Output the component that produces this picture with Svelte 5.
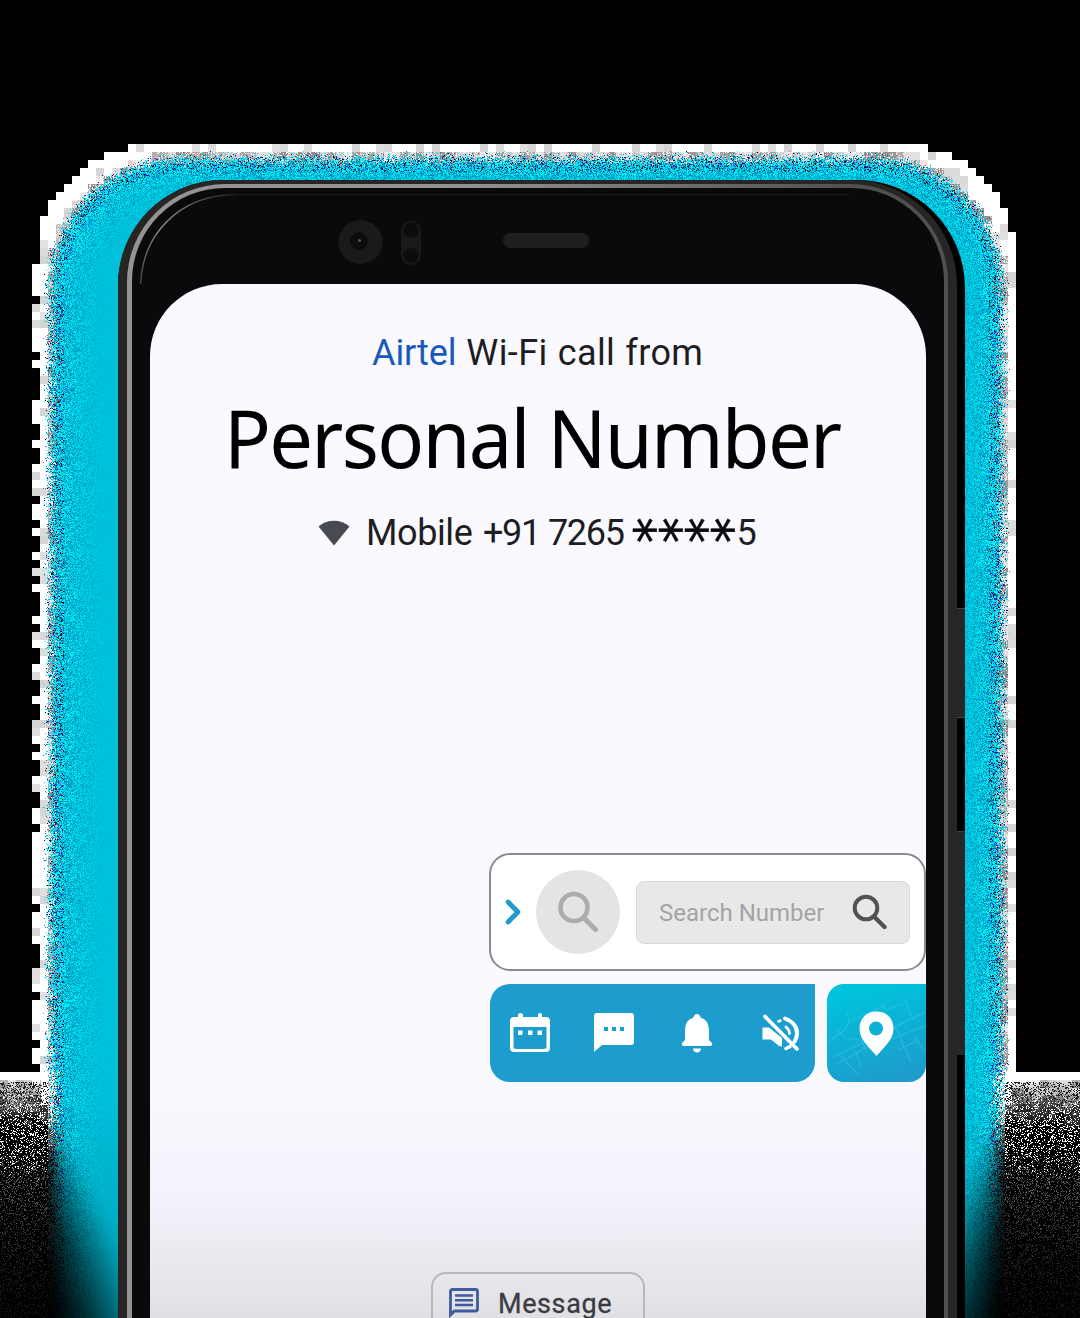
<script>
  import { onMount } from 'svelte';

  const WIDTH = 1080;
  const HEIGHT = 1318;
  let canvas;

  // Small seeded generator so the grain is identical on every load.
  let seed = 90210;
  function rnd() {
    seed = (seed * 1664525 + 1013904223) >>> 0;
    return seed / 4294967296;
  }

  const clamp = (v, a = 0, b = 1) => Math.min(b, Math.max(a, v));
  const smooth = (a, b, v) => {
    const t = clamp((v - a) / (b - a));
    return t * t * (3 - 2 * t);
  };

  // Depth in pixels inside the rounded glow shape; negative outside.
  function depth(x, y, r) {
    const dx = Math.abs(x - 526) - (486 - r);
    const dy = 148 + r - y;
    if (dx > 0 && dy > 0) return r - Math.hypot(dx, dy);
    return r - Math.max(dx, dy);
  }

  function paint(ctx) {
    const img = ctx.createImageData(WIDTH, HEIGHT);
    const cols = WIDTH / 8;
    const cell = [];
    for (let by = 0; by < 165; by++) {
      for (let bx = 0; bx < cols; bx++) {
        const edge = depth(bx * 8 + 4, by * 8 + 4, 110);
        const d = depth(bx * 8 + 4, by * 8 + 4, 140);
        cell.push({ d, on: edge > -3 || (bx === 4 && by > 32 && rnd() < 0.6), tone: rnd() });
      }
    }
    for (let y = 0; y < HEIGHT; y++) {
      for (let x = 0; x < WIDTH; x++) {
        const c = cell[(y >> 3) * cols + (x >> 3)];
        const d = depth(x, y, 140);
        let r = 0, g = 0, b = 0;
        if (c.on && y < 1150) {
          r = g = b = 255;
          if (c.d > -6 && c.d < 5 && c.tone > 0.72) r = g = b = 175 + c.tone * 50;
          if (c.d >= 5) {
            r = 150 + c.tone * 100;
            g = b = r - 14;
            if (rnd() < 0.25) r = g = b = 245;
          }
        }
        const q = rnd();
        const k = rnd();
        if (d > 2 && q < smooth(2, 19, d)) {
          const grit = 1 - smooth(12, 38, d);
          if (k < grit * 0.66) {
            const s = rnd();
            if (s < 0.45) [r, g, b] = [0, 245, 255];
            else if (s < 0.6 && d < 24) [r, g, b] = [0, 20, 30];
            else if (s < 0.73) [r, g, b] = d < 24 ? [20, 30, 225] : [10, 130, 215];
            else if (s < 0.94 || d > 22) [r, g, b] = [0, 130, 165];
            else if (s < 0.97) [r, g, b] = [235, 60, 90];
            else [r, g, b] = [110, 110, 115];
          } else {
            const n = (rnd() - 0.5) * 130 * (1 - smooth(12, 76, d));
            r = 0;
            g = clamp(192 + n, 0, 255);
            b = clamp(218 + n * 0.6, 0, 255);
          }
        }
        if (y >= 1072) {
          const t = clamp((y - 1085) / 233);
          if (d < 8) {
            const band = y < 1080 ? 255 : clamp(245 - (y - 1076) * 5 + (c.tone - 0.5) * 90, 0, 255);
            r = g = b = d > 0 && y < 1105 ? 255 : band;
            if (y >= 1082) {
              const fall = Math.exp(-Math.max(0, y - 1140) / 80);
              const bright = rnd() < 1 - smooth(1130, 1185, y) ? 255 : 150 * fall * (0.4 + k);
              if (q < 0.25 * smooth(1080, 1120, y)) r = g = b = bright;
              else if (k < 0.35) r = g = b = Math.min(band, 35 * fall);
            }
          } else {
            const f = smooth(t * 40 - 40, 8 + t * 120, d) * (1 - 0.16 * t);
            const fade = 1 - smooth(1085, 1120, y) * (1 - f);
            r *= fade;
            g *= fade;
            b *= fade;
            const speck = (1 - smooth(8, 26, d)) * 0.4;
            if (rnd() < speck) r = g = b = rnd() < 1 - smooth(1100, 1150, y) ? 255 : 70 * (1 - t);
          }
        }
        const i = (y * WIDTH + x) * 4;
        img.data[i] = r;
        img.data[i + 1] = g;
        img.data[i + 2] = b;
        img.data[i + 3] = 255;
      }
    }
    ctx.putImageData(img, 0, 0);
  }

  onMount(() => paint(canvas.getContext('2d')));
</script>

<main class="stage">
  <canvas class="glow" bind:this={canvas} width={WIDTH} height={HEIGHT}></canvas>

  <div class="phone">
    <i class="key power"></i>
    <i class="key volume"></i>
    <div class="shell">
      <div class="rim">
        <div class="face">
          <svg class="sensors" width="812" height="96" viewBox="132 188 812 96">
            <defs>
              <linearGradient id="shine" x1="0" y1="1" x2="1" y2="0">
                <stop offset="0" stop-color="#444" /><stop offset=".45" stop-color="#929292" /><stop offset="1" stop-color="#222" />
              </linearGradient>
            </defs>
            <path d="M140.500 288C141 235 178 196 234 194.500" fill="none" stroke="url(#shine)" stroke-width="1.300" />
            <path d="M234 194.500H850" stroke="#1b1b1b" />
            <circle cx="360.500" cy="242" r="22" fill="#1a1a1a" />
            <circle cx="359" cy="241" r="9" fill="#0d0d0d" />
            <circle cx="359.500" cy="240.500" r="1.500" fill="#555" />
            <rect x="401" y="221" width="20" height="44" rx="10" fill="#191919" />
            <circle cx="411" cy="230" r="7.500" fill="#0c0c0c" />
            <circle cx="411" cy="255.500" r="7.500" fill="#0c0c0c" />
            <rect x="503" y="233" width="86.500" height="15" rx="7.500" fill="#1e1e20" />
          </svg>

          <section class="screen">
            <header class="caller">
              <p class="carrier"><span>Airtel</span> Wi-Fi call from</p>
              <h1>Personal Number</h1>
              <p class="number">
                <svg width="32" height="26" viewBox="0 0 32 26"><path d="M.500 6.500C9-1.300 23-1.300 31.500 6.500L16 25.500Z" fill="#484a52" /></svg>
                <span class="digits">Mobile <span class="code">+91</span><span class="mid">7265</span></span>
                <span class="stars">
                  {#each [0, 1, 2, 3] as n (n)}<b>*</b>{/each}
                </span>
                <span class="last">5</span>
              </p>
            </header>

            <div class="widget">
              <div class="search">
                <svg class="chevron" width="18" height="28" viewBox="0 0 18 28"><path d="M4 4L14 14L4 24" fill="none" stroke="#1c9dcd" stroke-width="4.800" stroke-linecap="round" stroke-linejoin="round" /></svg>
                <div class="avatar">
                  <svg width="42" height="42" viewBox="0 0 42 42" fill="none" stroke="#acacac"><circle cx="17" cy="16.500" r="13.500" stroke-width="4.600" /><path d="M28 28L38.500 38.500" stroke-width="5" stroke-linecap="round" /></svg>
                </div>
                <div class="field">
                  <span>Search Number</span>
                  <svg width="36" height="36" viewBox="0 0 36 36" fill="none" stroke="#525252"><circle cx="14" cy="14" r="11.300" stroke-width="4" /><path d="M23 23.500L32.500 33" stroke-width="4.400" stroke-linecap="round" /></svg>
                </div>
              </div>

              <div class="tools">
                <div class="actions">
                  <svg width="42" height="42" viewBox="0 0 42 42" fill="#fff"><path fill-rule="evenodd" d="M5 5H9V3Q9 1 11.500 1T14 3V5H29V3Q29 1 31 1T33 3V5H37Q41 5 41 9V36Q41 40 37 40H5Q1 40 1 36V9Q1 5 5 5ZM4.500 15V34.500Q4.500 37 7 37H35Q37.500 37 37.500 34.500V15Z" /><path d="M9 18.500h4.500v4.500h-4.500zM19 18.500h4.500v4.500h-4.500zM28.500 18.500h4.500v4.500h-4.500z" /></svg>
                  <svg width="42" height="42" viewBox="0 0 42 42"><path d="M4 1H38Q41 1 41 4V30Q41 33 38 33H9L1 40V4Q1 1 4 1Z" fill="#fff" /><path d="M11 15h4v4h-4zM19 15h4v4h-4zM27 15h4v4h-4z" fill="#1c9dcd" /></svg>
                  <svg width="42" height="42" viewBox="0 0 42 42" fill="#fff"><path d="M21 2Q24 2 24.500 5.500Q33 8 33 18V28L36 31Q37 34 34 34H8Q5 34 6 31L9 28V18Q9 8 17.500 5.500Q18 2 21 2Z" /><path d="M17 36.500H25Q24.500 40.500 21 40.500T17 36.500Z" /></svg>
                  <svg width="42" height="42" viewBox="0 0 42 42" fill="none" stroke="#fff" stroke-linecap="round"><path d="M2.500 15.500H9L22 26V34.500L19 34L11 27.500H2.500Z" fill="#fff" stroke="none" /><path d="M5 4.500L37 37" stroke-width="3.800" /><path d="M25 6.500Q37 11 37 21.500Q37 26 34.500 29.500" stroke-width="4" /><path d="M18.500 9.500L20.500 8.500" stroke-width="2.600" /><path d="M26 15Q29.500 18 29.500 21.500" stroke-width="2.800" /><path d="M26 36.500L30 34.500" stroke-width="3.600" /></svg>
                </div>
                <div class="map">
                  <svg width="98" height="98" viewBox="0 0 98 98" fill="none">
                    <g stroke="#56d6e6" stroke-opacity=".34" stroke-width="1.200"><path d="M20 28L22 38L60 20M22 38L18 46M9 45L18 54L34 56L40 68M2 57L18 46M6 73L38 58L98 28M10 80L42 62M14 72L30 90M28 66L34 84M54 18L58 26L76 20M78 16L86 36M68 42L84 78M64 55L98 42M70 66L92 56M88 52L96 66" /></g>
                    <path fill="#fff" fill-rule="evenodd" d="M49.500 27.500C39 27.500 32.500 35 32.500 44.500C32.500 55 40 61 49.500 72C59 61 66.500 55 66.500 44.500C66.500 35 60 27.500 49.500 27.500ZM49 37.500A7 7 0 1 1 49 51.500A7 7 0 1 1 49 37.500Z" />
                  </svg>
                </div>
              </div>
            </div>

            <div class="message">
              <svg width="30" height="30" viewBox="0 0 30 30" fill="none" stroke="#3f5b9c"><path d="M1.500 27V3.500Q1.500 1.500 3.500 1.500H26.500Q28.500 1.500 28.500 3.500V21Q28.500 23 26.500 23H5.500Z" stroke-width="2.800" /><path d="M6 7.500H24M6 12.300H24M6 17H24" stroke-width="2.500" /></svg>
              <span>Message</span>
            </div>
          </section>
        </div>
      </div>
    </div>
  </div>
</main>

<style>
  :global(body) { background: #000; overflow: hidden; }
  .stage {
    display: grid;
    width: 1080px;
    height: 1318px;
    overflow: hidden;
    font-family: Roboto, "Liberation Sans", sans-serif;
  }
  .glow, .phone { grid-area: 1 / 1; }
  svg { display: block; flex: none; }
  p, h1 { margin: 0; font-weight: 400; white-space: nowrap; }

  .phone {
    position: relative;
    box-sizing: border-box;
    width: 847px;
    height: 1138px;
    margin: 180px 0 0 118px;
    background: #000;
    border-radius: 105px 108px 0 0;
  }
  .key { position: absolute; left: 839px; width: 8px; background: #282627; border-top: 1px solid #454545; box-sizing: border-box; }
  .power { top: 428px; height: 110px; border-bottom: 1px solid #454545; }
  .volume { top: 651px; height: 224px; }
  .shell {
    box-sizing: border-box;
    width: 839px;
    height: 1138px;
    padding: 4px 9px 0;
    background: #272625;
    border-radius: 105px 105px 0 0;
  }
  .rim {
    box-sizing: border-box;
    height: 1134px;
    padding: 4px 4px 0 5px;
    background: linear-gradient(90deg, #949492 0, #929292 42%, #505050 88%, #505050);
    border-radius: 98px 98px 0 0;
  }
  .face {
    height: 1130px;
    background: #0a0a0c;
    border-radius: 93px 93px 0 0;
    overflow: hidden;
  }
  .screen {
    display: flex;
    flex-direction: column;
    box-sizing: border-box;
    width: 776px;
    height: 1034px;
    margin-left: 18px;
    background: linear-gradient(#faf9ff 0, #f9f9fe 76%, #f4f3fc 88%, #e0e0e4);
    border-radius: 72px 72px 0 0;
    overflow: hidden;
  }

  .caller { flex: none; height: 569px; box-sizing: border-box; padding-top: 46px; color: #1d1d22; }
  .carrier { height: 46px; padding-left: 222px; font-size: 36px; line-height: 47px; letter-spacing: 0.4px; word-spacing: 0.700px; }
  .carrier span { color: #185abc; letter-spacing: -0.1px; }
  h1 {
    box-sizing: border-box;
    width: 700px;
    height: 110px;
    margin-left: 74px;
    padding-top: 6px;
    font: 400 81px/110px "Noto Sans", "Open Sans", sans-serif;
    letter-spacing: -1.8px;
    color: #000;
    transform: scaleX(0.959);
    transform-origin: 0 0;
  }
  .number { display: flex; align-items: center; height: 93px; padding-left: 168px; font-size: 36px; line-height: 46px; }
  .digits { width: 261px; margin-left: 16px; letter-spacing: -0.4px; }
  .code { margin-left: 2px; letter-spacing: -1.300px; }
  .mid { margin-left: 8px; letter-spacing: -1.300px; }
  .stars { display: flex; margin-left: 4px; color: #0a0a0c; }
  .stars b {
    width: 26px;
    font: 400 51px/46px "DejaVu Sans", sans-serif;
    text-indent: 0.500px;
    -webkit-text-stroke: 0.600px #0a0a0c;
    transform: translateY(6px) rotate(90deg);
    transform-origin: 13px 14px;
  }
  .last { margin-left: 1.500px; }

  .widget { flex: none; width: 437px; margin-left: 339px; }
  .search {
    display: flex;
    align-items: center;
    box-sizing: border-box;
    height: 118px;
    padding-left: 13px;
    background: #fff;
    border: 2px solid #8b8b8d;
    border-radius: 21px;
  }
  .avatar { display: grid; place-items: center; width: 84px; height: 84px; margin-left: 14px; border-radius: 50%; background: #e4e4e4; }
  .field {
    display: flex;
    align-items: center;
    justify-content: space-between;
    box-sizing: border-box;
    width: 274px;
    height: 63px;
    margin-left: 16px;
    padding: 0 21px 0 22px;
    background: #e8e8e8;
    border: 1.5px solid #d9d9d9;
    border-radius: 8px;
    color: #a4a4a4;
    font-size: 24px;
    white-space: nowrap;
  }
  .field span { padding-top: 2px; }
  .tools { display: flex; gap: 12px; margin-top: 12.500px; padding-left: 1px; }
  .actions {
    display: flex;
    align-items: center;
    gap: 41.500px;
    box-sizing: border-box;
    width: 325px;
    height: 98px;
    padding: 1px 0 0 19px;
    background: #1c9dcd;
    border-radius: 20px 0 20px 20px;
  }
  .map { width: 99px; height: 98px; background: linear-gradient(165deg, #00c2db 12%, #1c9dcd 88%); border-radius: 17px 0 17px 17px; overflow: hidden; }

  .message {
    display: flex;
    box-sizing: border-box;
    width: 214px;
    height: 62px;
    margin: 190.500px 0 0 281px;
    padding: 14px 0 0 16px;
    border: 2px solid #b7b7bd;
    border-radius: 15px;
    color: #3a3b40;
    font-size: 27px;
    line-height: 32px;
    letter-spacing: 0.600px;
    flex: none;
  }
  .message span { margin-left: 19px; -webkit-text-stroke: 0.300px #3a3b40; }
</style>
